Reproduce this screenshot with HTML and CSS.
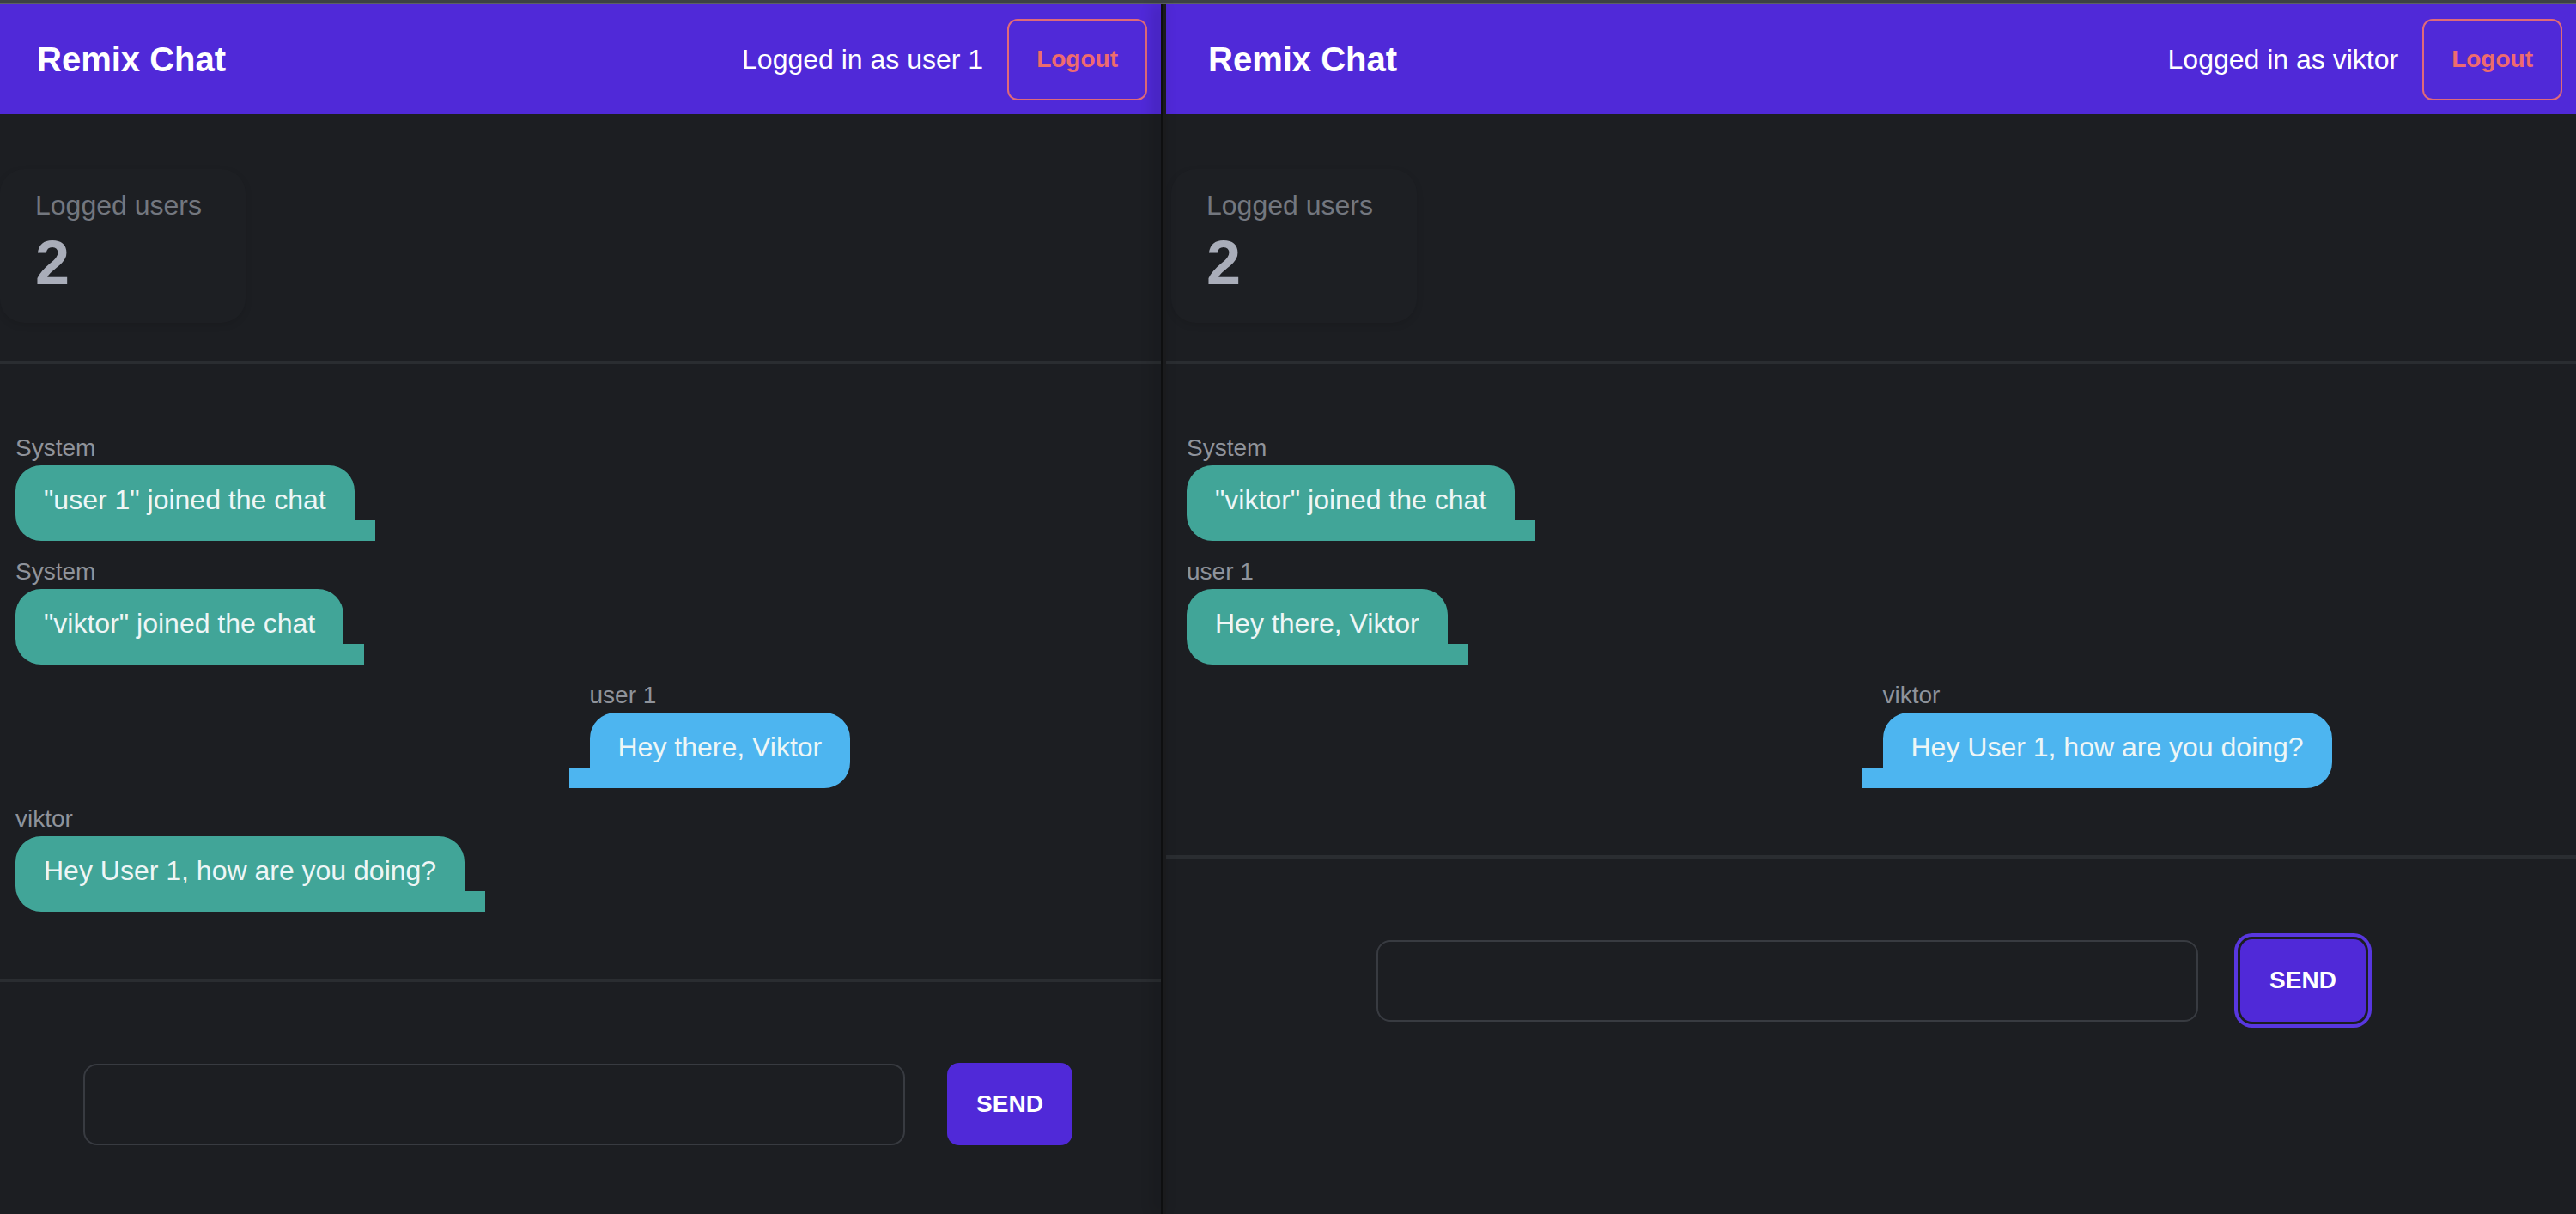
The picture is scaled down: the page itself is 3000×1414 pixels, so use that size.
FILE: index.html
```html
<!DOCTYPE html>
<html lang="en">
<head>
<meta charset="utf-8">
<title>Remix Chat</title>
<link rel="stylesheet" href="styles.css">
</head>
<body>
<div class="screen">
  <div class="frame-top"></div>
  <div class="windows">
    <section class="window window-left">
      <header class="topbar">
        <h1 class="brand">Remix Chat</h1>
        <div class="session">
          <span class="who">Logged in as user 1</span>
          <button class="logout" type="button">Logout</button>
        </div>
      </header>
      <section class="stats">
        <div class="stat-card">
          <div class="stat-label">Logged users</div>
          <div class="stat-number">2</div>
        </div>
      </section>
      <hr class="divider">
      <ul class="messages">
        <li class="msg">
          <div class="author">System</div>
          <div class="bubble">"user 1" joined the chat</div>
        </li>
        <li class="msg">
          <div class="author">System</div>
          <div class="bubble">"viktor" joined the chat</div>
        </li>
        <li class="msg own">
          <div class="author">user 1</div>
          <div class="bubble">Hey there, Viktor</div>
        </li>
        <li class="msg">
          <div class="author">viktor</div>
          <div class="bubble">Hey User 1, how are you doing?</div>
        </li>
      </ul>
      <hr class="divider">
      <form class="composer">
        <div class="composer-row">
          <input class="composer-input" type="text" aria-label="Message">
          <button class="send" type="button">Send</button>
        </div>
      </form>
    </section>
    <div class="seam"></div>
    <section class="window window-right">
      <header class="topbar">
        <h1 class="brand">Remix Chat</h1>
        <div class="session">
          <span class="who">Logged in as viktor</span>
          <button class="logout" type="button">Logout</button>
        </div>
      </header>
      <section class="stats">
        <div class="stat-card">
          <div class="stat-label">Logged users</div>
          <div class="stat-number">2</div>
        </div>
      </section>
      <hr class="divider">
      <ul class="messages">
        <li class="msg">
          <div class="author">System</div>
          <div class="bubble">"viktor" joined the chat</div>
        </li>
        <li class="msg">
          <div class="author">user 1</div>
          <div class="bubble">Hey there, Viktor</div>
        </li>
        <li class="msg own">
          <div class="author">viktor</div>
          <div class="bubble">Hey User 1, how are you doing?</div>
        </li>
      </ul>
      <hr class="divider">
      <form class="composer">
        <div class="composer-row">
          <input class="composer-input" type="text" aria-label="Message">
          <button class="send send-focused" type="button">Send</button>
        </div>
      </form>
    </section>
  </div>
</div>
</body>
</html>
```
FILE: styles.css
```css
* {
  box-sizing: border-box;
}

html, body {
  margin: 0;
  padding: 0;
  background: #1c1e22;
}

body {
  font-family: "Liberation Sans", Arial, Helvetica, sans-serif;
  color: #ffffff;
  width: 3000px;
  height: 1414px;
  overflow: hidden;
}

.screen {
  display: flex;
  flex-direction: column;
  height: 1414px;
}

.frame-top {
  height: 5px;
  flex: none;
  background: #3c4145;
  border-bottom: 1px solid #5b6064;
}

.windows {
  display: flex;
  flex: 1;
  min-height: 0;
}

.window {
  flex: none;
  background: #1c1e22;
  overflow: hidden;
}

.window-left {
  width: 1358px;
  margin-left: -6px;
}

.window-right {
  width: 1642px;
}

.seam {
  flex: none;
  width: 6px;
  background: #2b2c2e;
  border-left: 2px solid #0e0f10;
  border-right: 3px solid #1a1b1d;
  position: relative;
  z-index: 1;
  box-shadow: -6px 0 16px rgba(0, 0, 0, 0.3);
}

/* Header */
.topbar {
  height: 128px;
  background: #5029d8;
  display: flex;
  align-items: center;
  justify-content: space-between;
  padding: 0 16px 0 49px;
}

.brand {
  margin: 0;
  font-size: 40px;
  font-weight: 700;
  line-height: 48px;
  color: #ffffff;
}

.session {
  display: flex;
  align-items: center;
  gap: 28px;
}

.who {
  font-size: 32px;
  line-height: 48px;
  color: #ffffff;
}

.logout {
  height: 95px;
  padding: 0 32px;
  background: transparent;
  border: 2px solid #e06a78;
  border-radius: 12px;
  color: #ee6b6f;
  font-family: inherit;
  font-size: 28px;
  font-weight: 700;
}

/* Stats */
.stats {
  padding: 64px 0 44px 6px;
}

.stat-card {
  width: 286px;
  padding: 18px 41px 27px;
  border-radius: 28px;
  background: #1d1f23;
  box-shadow: 0 3px 8px rgba(0, 0, 0, 0.1);
}

.stat-label {
  font-size: 32px;
  line-height: 48px;
  color: #73777f;
}

.stat-number {
  font-size: 72px;
  font-weight: 700;
  line-height: 86px;
  color: #a9adb9;
}

.divider {
  margin: 0;
  border: 0;
  height: 4px;
  background: #2a2d31;
}

/* Messages */
.messages {
  list-style: none;
  margin: 0;
  padding: 78px 24px;
}

.msg + .msg {
  margin-top: 16px;
}

.author {
  font-size: 28px;
  line-height: 40px;
  color: #8f939b;
}

.bubble {
  position: relative;
  display: inline-block;
  vertical-align: top;
  padding: 16px 33px 24px;
  font-size: 32px;
  line-height: 48px;
  color: #eef6f6;
  background: #41a598;
  border-radius: 30px 30px 0 30px;
}

.bubble::after {
  content: "";
  position: absolute;
  bottom: 0;
  right: -24px;
  width: 24px;
  height: 24px;
  background: inherit;
}

.msg.own {
  margin-left: calc(50% + 13.5px);
}

.msg.own .bubble {
  background: #4db5f0;
  border-radius: 30px 30px 30px 0;
}

.msg.own .bubble::after {
  right: auto;
  left: -24px;
}

/* Composer */
.composer {
  padding-top: 94px;
}

.composer-row {
  width: 1152px;
  margin: 0 auto;
  display: flex;
  align-items: center;
  gap: 49px;
}

.composer-input {
  flex: 1;
  height: 95px;
  background: transparent;
  border: 2px solid #383b41;
  border-radius: 16px;
  color: #ffffff;
  font-family: inherit;
  font-size: 32px;
  padding: 0 32px;
  outline: none;
}

.send {
  flex: none;
  width: 146px;
  height: 96px;
  border: 0;
  border-radius: 14px;
  background: #5029d8;
  color: #ffffff;
  font-family: inherit;
  font-size: 28px;
  font-weight: 700;
  text-transform: uppercase;
}

.send-focused {
  box-shadow: 0 0 0 3px #1c1e22, 0 0 0 7px #5837df;
}
```
